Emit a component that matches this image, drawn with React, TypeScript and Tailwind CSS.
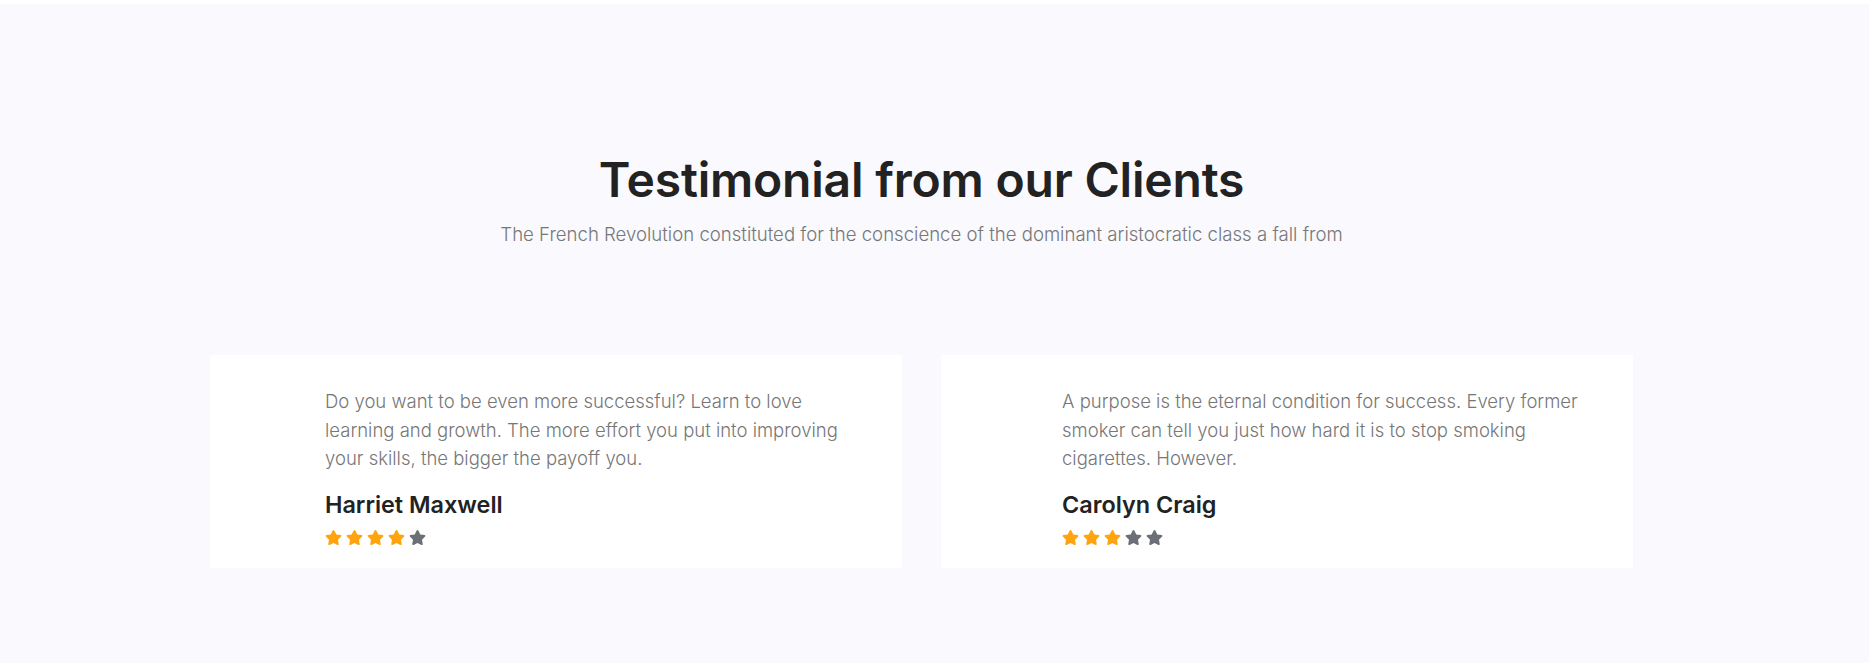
import { FaStar } from "react-icons/fa";

const testimonials = [
  {
    lines: [
      "Do you want to be even more successful? Learn to love",
      "learning and growth. The more effort you put into improving",
      "your skills, the bigger the payoff you.",
    ],
    name: "Harriet Maxwell",
    rating: 4,
    indent: "pl-[115px]",
  },
  {
    lines: [
      "A purpose is the eternal condition for success. Every former",
      "smoker can tell you just how hard it is to stop smoking",
      "cigarettes. However.",
    ],
    name: "Carolyn Craig",
    rating: 3,
    indent: "pl-[121px]",
  },
];

function Stars({ rating }: { rating: number }) {
  return (
    <div className="flex items-center gap-[4px]">
      {[1, 2, 3, 4, 5].map((i) => (
        <FaStar
          key={i}
          size={17}
          className={i <= rating ? "text-[#ffa40f]" : "text-[#6d6f76]"}
        />
      ))}
    </div>
  );
}

export default function App() {
  return (
    <div className="min-h-[663px] bg-white pt-1 font-['Inter',sans-serif]">
      <section className="min-h-[659px] bg-[#f9f9fe] pr-[26px] pt-[147px] pb-[89px]">
        <div className="mx-auto w-[1423px]">
          <div className="text-center">
            <h2 className="text-[48px] font-semibold leading-[58px] tracking-[-0.2px] text-[#222222]">
              Testimonial from our Clients
            </h2>
            <p className="mt-[11px] text-[18.6px] font-light leading-[28px] text-[#777777]">
              The French Revolution constituted for the conscience of the dominant aristocratic class a fall from
            </p>
          </div>

          <div className="mt-[107px] grid grid-cols-2 gap-[39px]">
            {testimonials.map((t) => (
              <div key={t.name} className={`h-[213px] bg-white pt-[32px] ${t.indent}`}>
                <p className="text-[18.5px] font-light leading-[28.5px] text-[#777777]">
                  {t.lines.map((l) => (
                    <span key={l} className="block">
                      {l}
                    </span>
                  ))}
                </p>
                <h4 className="mt-[17px] text-[23.4px] font-semibold leading-[30px] text-[#222222]">
                  {t.name}
                </h4>
                <div className="mt-[9px]">
                  <Stars rating={t.rating} />
                </div>
              </div>
            ))}
          </div>
        </div>
      </section>
    </div>
  );
}
